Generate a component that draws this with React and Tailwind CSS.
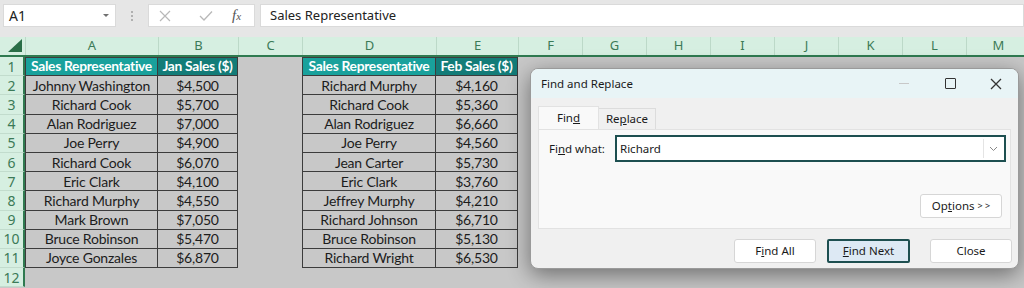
import React from "react";

const cols = [
  { l: "A", w: "w-[133px]" },
  { l: "B", w: "w-[80px]" },
  { l: "C", w: "w-[64px]" },
  { l: "D", w: "w-[134px]" },
  { l: "E", w: "w-[82px]" },
  { l: "F", w: "w-[64px]" },
  { l: "G", w: "w-[64px]" },
  { l: "H", w: "w-[64px]" },
  { l: "I", w: "w-[64px]" },
  { l: "J", w: "w-[64px]" },
  { l: "K", w: "w-[64px]" },
  { l: "L", w: "w-[64px]" },
  { l: "M", w: "w-[64px]" },
];

const jan = [
  ["Johnny Washington", "$4,500"],
  ["Richard Cook", "$5,700"],
  ["Alan Rodriguez", "$7,000"],
  ["Joe Perry", "$4,900"],
  ["Richard Cook", "$6,070"],
  ["Eric Clark", "$4,100"],
  ["Richard Murphy", "$4,550"],
  ["Mark Brown", "$7,050"],
  ["Bruce Robinson", "$5,470"],
  ["Joyce Gonzales", "$6,870"],
];
const feb = [
  ["Richard Murphy", "$4,160"],
  ["Richard Cook", "$5,360"],
  ["Alan Rodriguez", "$6,660"],
  ["Joe Perry", "$4,560"],
  ["Jean Carter", "$5,730"],
  ["Eric Clark", "$3,760"],
  ["Jeffrey Murphy", "$4,210"],
  ["Richard Johnson", "$6,710"],
  ["Bruce Robinson", "$5,130"],
  ["Richard Wright", "$6,530"],
];

const cellFont = { fontFamily: "Lato, 'Open Sans', sans-serif" };
const uiFont = { fontFamily: "'Noto Sans', 'Open Sans', sans-serif" };

function Cell({ w, children, kind, top, left }) {
  const base = `${w} h-full flex items-center justify-center shrink-0 whitespace-nowrap overflow-hidden`;
  if (kind === "head") {
    return (
      <div className={`${base} ${left ? "bg-[#19a19c]" : "bg-[#137c78]"} text-white font-bold border-r border-b border-[#3c3c3c] ${top ? "border-t" : ""} ${left ? "border-l" : ""} text-[13.8px] tracking-[-0.3px]`}>
        {children}
      </div>
    );
  }
  if (kind === "data") {
    return (
      <div className={`${base} text-[#1c1c1c] border-r border-b border-[#3c3c3c] ${left ? "border-l" : ""} text-[14px] tracking-[-0.2px]`}>
        {children}
      </div>
    );
  }
  return <div className={base}></div>;
}

function SheetRow({ n, children }) {
  return (
    <div className="flex h-[19.2px]">
      <div className="w-[25px] shrink-0 h-full flex items-center justify-center bg-[#d6efe1] text-[#3c7a57] text-[14px] border-r-2 border-r-[#2f7a50] border-b border-b-[#c2dccd]" style={uiFont}>
        {n}
      </div>
      {children}
    </div>
  );
}

export default function App() {
  return (
    <div className="relative w-[1024px] h-[288px] overflow-hidden bg-[#c8c8c8]" style={uiFont}>
      {/* Formula bar */}
      <div className="h-[37px] bg-[#e6e6e6] flex items-start pt-[4px] pl-[3px]">
        <div className="w-[113px] h-[23px] bg-white border border-[#dadada] flex items-center pl-[5px] pr-[6px]">
          <span className="text-[14px] text-[#222]">A1</span>
          <span className="ml-auto w-0 h-0 border-l-[3px] border-r-[3px] border-t-[3px] border-l-transparent border-r-transparent border-t-[#707070]"></span>
        </div>
        <div className="w-[32px] h-[23px] flex flex-col items-center justify-center gap-[2px]">
          <span className="w-[2px] h-[2px] bg-[#b0b0b0]"></span>
          <span className="w-[2px] h-[2px] bg-[#b0b0b0]"></span>
          <span className="w-[2px] h-[2px] bg-[#b0b0b0]"></span>
        </div>
        <div className="w-[107px] h-[23px] bg-white border border-[#dadada] flex items-center">
          <svg width="12" height="12" viewBox="0 0 12 12" className="ml-[10px]">
            <path d="M1 1 L11 11 M11 1 L1 11" stroke="#b8b8b8" strokeWidth="1.2" fill="none" />
          </svg>
          <svg width="14" height="12" viewBox="0 0 14 12" className="ml-[28px]">
            <path d="M1 6 L5 10 L13 1.5" stroke="#b8b8b8" strokeWidth="1.3" fill="none" />
          </svg>
          <span className="ml-[19px] text-[15px] italic text-[#555]" style={{ fontFamily: "'Liberation Serif', serif" }}>
            f<span className="text-[11px]">x</span>
          </span>
        </div>
        <div className="ml-[5px] flex-1 h-[23px] bg-white border border-[#dadada] flex items-center pl-[9px]">
          <span className="text-[13px] text-[#222]">Sales Representative</span>
        </div>
      </div>

      {/* Column headers */}
      <div className="flex h-[20px] border-b-2 border-[#2f7a50]">
        <div className="w-[25px] shrink-0 h-full bg-[#d6efe1] flex items-end justify-end pr-[3px] pb-[3px]">
          <svg width="14" height="13" viewBox="0 0 14 13">
            <path d="M14 0 L14 13 L0 13 Z" fill="#2a6e47" />
          </svg>
        </div>
        {cols.map((c) => (
          <div key={c.l} className={`${c.w} shrink-0 h-full bg-[#d6efe1] border-l border-[#bcd9c8] flex items-center justify-center text-[13px] text-[#3c7a57]`}>
            {c.l}
          </div>
        ))}
      </div>

      {/* Rows */}
      <div style={cellFont}>
        <SheetRow n={1}>
          <Cell w="w-[133px]" kind="head" top left>Sales Representative</Cell>
          <Cell w="w-[80px]" kind="head" top>Jan Sales ($)</Cell>
          <Cell w="w-[64px]" />
          <Cell w="w-[134px]" kind="head" top left>Sales Representative</Cell>
          <Cell w="w-[82px]" kind="head" top>Feb Sales ($)</Cell>
        </SheetRow>
        {jan.map((r, i) => (
          <SheetRow key={i} n={i + 2}>
            <Cell w="w-[133px]" kind="data" left>{r[0]}</Cell>
            <Cell w="w-[80px]" kind="data">{r[1]}</Cell>
            <Cell w="w-[64px]" />
            <Cell w="w-[134px]" kind="data" left>{feb[i][0]}</Cell>
            <Cell w="w-[82px]" kind="data">{feb[i][1]}</Cell>
          </SheetRow>
        ))}
        <SheetRow n={12} />
      </div>

      {/* Find and Replace dialog */}
      <div className="absolute left-[530px] top-[68px] w-[489px] h-[201px] rounded-[8px] bg-[#f0f0f0] border border-[#9a9a9a] shadow-[0_6px_22px_rgba(0,0,0,0.45)] overflow-hidden text-[#1a1a1a]" style={uiFont}>
        <div className="h-[29px] bg-[#e8f4f6] flex items-center pl-[10px]">
          <span className="text-[11.5px]">Find and Replace</span>
          <div className="ml-auto flex items-center">
            <span className="w-[10px] h-px bg-[#c8c8c8] mr-[36px]"></span>
            <span className="w-[11px] h-[11px] border-[1.5px] border-[#333] rounded-[1px] mr-[34px]"></span>
            <svg width="12" height="12" viewBox="0 0 12 12" className="mr-[16px]">
              <path d="M1 1 L11 11 M11 1 L1 11" stroke="#333" strokeWidth="1.3" fill="none" />
            </svg>
          </div>
        </div>
        <div className="px-[7px] pt-[8px]">
          <div className="flex items-end h-[23px]">
            <div className="w-[61px] h-[23px] bg-[#f9f9f9] border border-b-0 border-[#e2e2e2] flex items-center justify-center text-[11.5px]">
              Fin<span className="underline">d</span>
            </div>
            <div className="w-[57px] h-[21px] bg-[#f0f0f0] border border-l-0 border-b-0 border-[#dcdcdc] flex items-center justify-center text-[11.5px]">
              Re<span className="underline">p</span>lace
            </div>
          </div>
          <div className="h-[100px] bg-[#f9f9f9] border border-[#e2e2e2] flex flex-col pl-[10px] pr-[4px] pt-[5px]">
            <div className="flex items-center h-[27px]">
              <span className="w-[66px] text-[11.5px]">Fi<span className="underline">n</span>d what:</span>
              <div className="flex-1 h-[27px] border-2 border-[#1d4f50] bg-white flex items-center pl-[3px] pr-[2px]">
                <span className="text-[11.5px]">Richard</span>
                <div className="ml-auto w-[19px] h-[19px] border-l border-[#e4e4e4] flex items-center justify-center">
                  <svg width="9" height="6" viewBox="0 0 9 6">
                    <path d="M1 1 L4.5 4.5 L8 1" stroke="#888" strokeWidth="1" fill="none" />
                  </svg>
                </div>
              </div>
            </div>
            <div className="flex justify-end mt-[32px] pr-[4px]">
              <div className="w-[82px] h-[24px] bg-white border border-[#d6d6d6] rounded-[3px] flex items-center justify-center text-[11.5px]">
                Op<span className="underline">t</span>ions <span className="text-[9px] ml-[3px]">&gt; &gt;</span>
              </div>
            </div>
          </div>
        </div>
        <div className="flex justify-end pr-[6px] pt-[10px] gap-[11px]">
          <div className="w-[82px] h-[24px] bg-white border border-[#d6d6d6] rounded-[3px] flex items-center justify-center text-[11.5px]">
            F<span className="underline">i</span>nd All
          </div>
          <div className="w-[83px] h-[24px] bg-[#dde9f4] border-2 border-[#1d4f50] rounded-[2px] flex items-center justify-center text-[11.5px] mr-[9px]">
            <span className="underline">F</span>ind Next
          </div>
          <div className="w-[82px] h-[24px] bg-white border border-[#d6d6d6] rounded-[3px] flex items-center justify-center text-[11.5px]">
            Close
          </div>
        </div>
      </div>
    </div>
  );
}
